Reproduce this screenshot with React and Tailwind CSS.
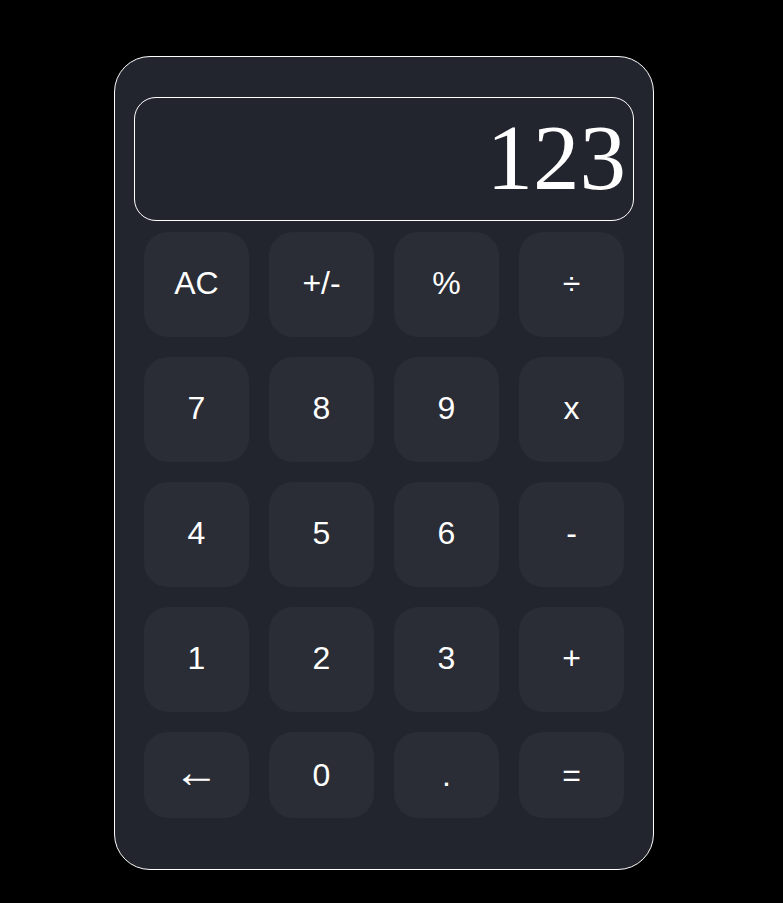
import React from 'react';

const keys = [
  ['AC', '+/-', '%', '÷'],
  ['7', '8', '9', 'x'],
  ['4', '5', '6', '-'],
  ['1', '2', '3', '+'],
  ['←', '0', '.', '='],
];

const App = () => {
  return (
    <div className="min-h-[903px] bg-black pt-[56px] pl-[114px]">
      <div className="w-[540px] h-[814px] bg-[#22252d] border border-white rounded-[36px] px-[19px] pt-[40px]">
        <div className="h-[124px] border border-white rounded-[22px] flex items-center justify-end pr-[7px]">
          <span className="text-white text-[93px] leading-none font-['Liberation_Serif',serif] pb-[3px]">123</span>
        </div>
        <div className="mt-[11px] px-[10px] flex flex-col gap-[20px]">
          {keys.map((row, i) => (
            <div key={i} className="grid grid-cols-4 gap-[20px]">
              {row.map((k) => (
                <button
                  key={k}
                  className={`${i === 4 ? 'h-[86px]' : 'h-[105px] pb-[3px]'} rounded-3xl bg-[#2a2d35] text-white flex items-center justify-center font-['Liberation_Sans',Arial,sans-serif] ${k === '←' ? 'text-[45px] pb-[6px]' : 'text-[32px]'}`}
                >
                  {k}
                </button>
              ))}
            </div>
          ))}
        </div>
      </div>
    </div>
  );
};

export default App;
